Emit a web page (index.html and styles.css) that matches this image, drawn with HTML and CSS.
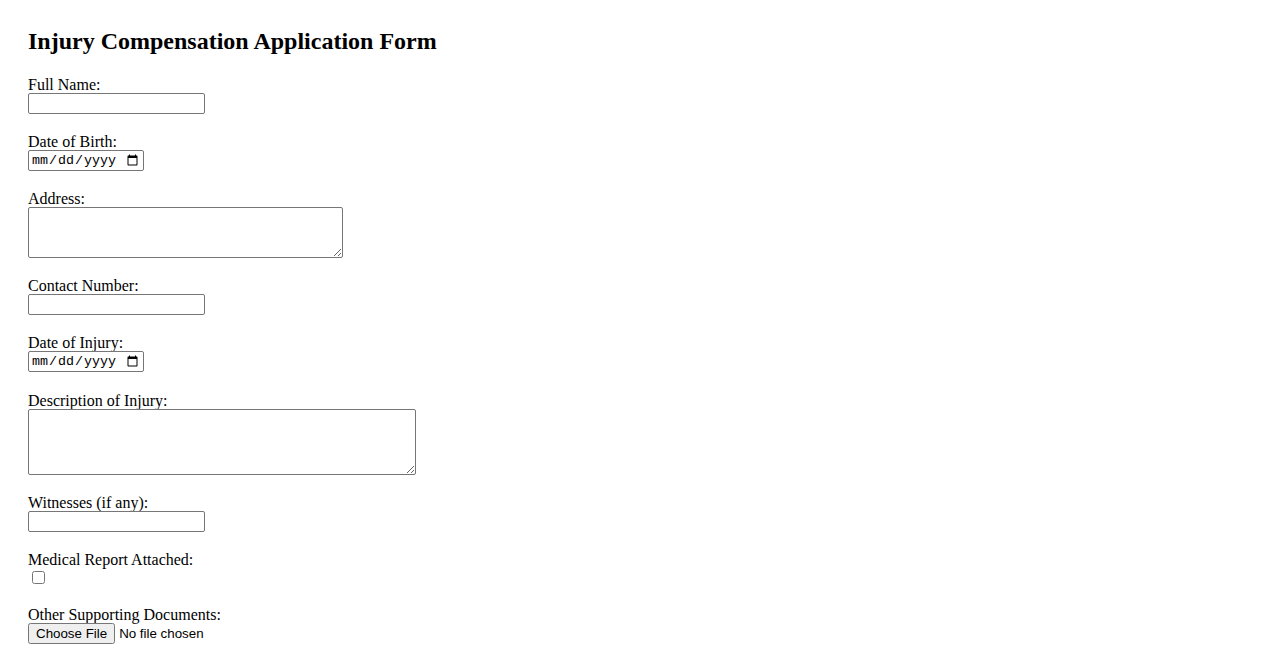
FILE: index.html
```html
<!DOCTYPE html>
<html lang="en">
<head>
<meta charset="utf-8">
<title>Injury Compensation Application Form</title>
<link rel="stylesheet" href="styles.css">
</head>
<body>
<main class="page">
  <h2 class="title">Injury Compensation Application Form</h2>
  <form class="form">
    <div class="field">
      <label class="label" for="name">Full Name:</label>
      <input class="text" type="text" id="name">
    </div>
    <div class="field">
      <label class="label" for="dob">Date of Birth:</label>
      <input class="date" type="date" id="dob">
    </div>
    <div class="field">
      <label class="label" for="address">Address:</label>
      <textarea class="area area-address" id="address"></textarea>
    </div>
    <div class="field">
      <label class="label" for="contact">Contact Number:</label>
      <input class="text" type="tel" id="contact">
    </div>
    <div class="field">
      <label class="label" for="doi">Date of Injury:</label>
      <input class="date" type="date" id="doi">
    </div>
    <div class="field field-after-date">
      <label class="label" for="desc">Description of Injury:</label>
      <textarea class="area area-desc" id="desc"></textarea>
    </div>
    <div class="field">
      <label class="label" for="witness">Witnesses (if any):</label>
      <input class="text" type="text" id="witness">
    </div>
    <div class="field">
      <label class="label" for="medical">Medical Report Attached:</label>
      <input class="check" type="checkbox" id="medical">
    </div>
    <div class="field">
      <label class="label" for="docs">Other Supporting Documents:</label>
      <input class="file" type="file" id="docs">
    </div>
  </form>
</main>
</body>
</html>
```

FILE: styles.css
```css
html, body {
  margin: 0;
  padding: 0;
  background: #ffffff;
}

body {
  font-family: "Liberation Serif", "Times New Roman", serif;
  font-size: 16px;
  color: #000000;
}

.page {
  padding: 27px 28px 28px 28px;
}

.title {
  margin: 0 0 20px 0;
  font-size: 24px;
  line-height: 28px;
  font-weight: bold;
}

.form {
  display: flex;
  flex-direction: column;
  gap: 18px;
}

.field {
  display: flex;
  flex-direction: column;
  align-items: flex-start;
}

.field-after-date {
  margin-top: 1px;
}

.label {
  display: block;
  line-height: 18px;
  padding-top: 1px;
  margin-bottom: -1px;
}

.text,
.date,
.area {
  box-sizing: border-box;
  margin: 0;
  border: 1px solid #767676;
  border-radius: 2px;
  background: #ffffff;
  font-size: 13.33px;
}

.text {
  width: 177px;
  height: 21px;
  padding: 1px 2px;
  font-family: "Liberation Sans", Arial, sans-serif;
}

.date {
  width: 116px;
  height: 21px;
  padding: 1px 2px;
  font-family: "Liberation Mono", "DejaVu Sans Mono", monospace;
}

.area {
  padding: 2px;
  font-family: "Liberation Mono", monospace;
  resize: both;
}

.area-address {
  width: 315px;
  height: 51px;
}

.area-desc {
  width: 388px;
  height: 66px;
}

.check {
  width: 13px;
  height: 13px;
  margin: 3px 3px 3px 4px;
}

.file {
  margin: 0;
  height: 21px;
  font-family: "Liberation Sans", Arial, sans-serif;
  font-size: 13.33px;
}
```
